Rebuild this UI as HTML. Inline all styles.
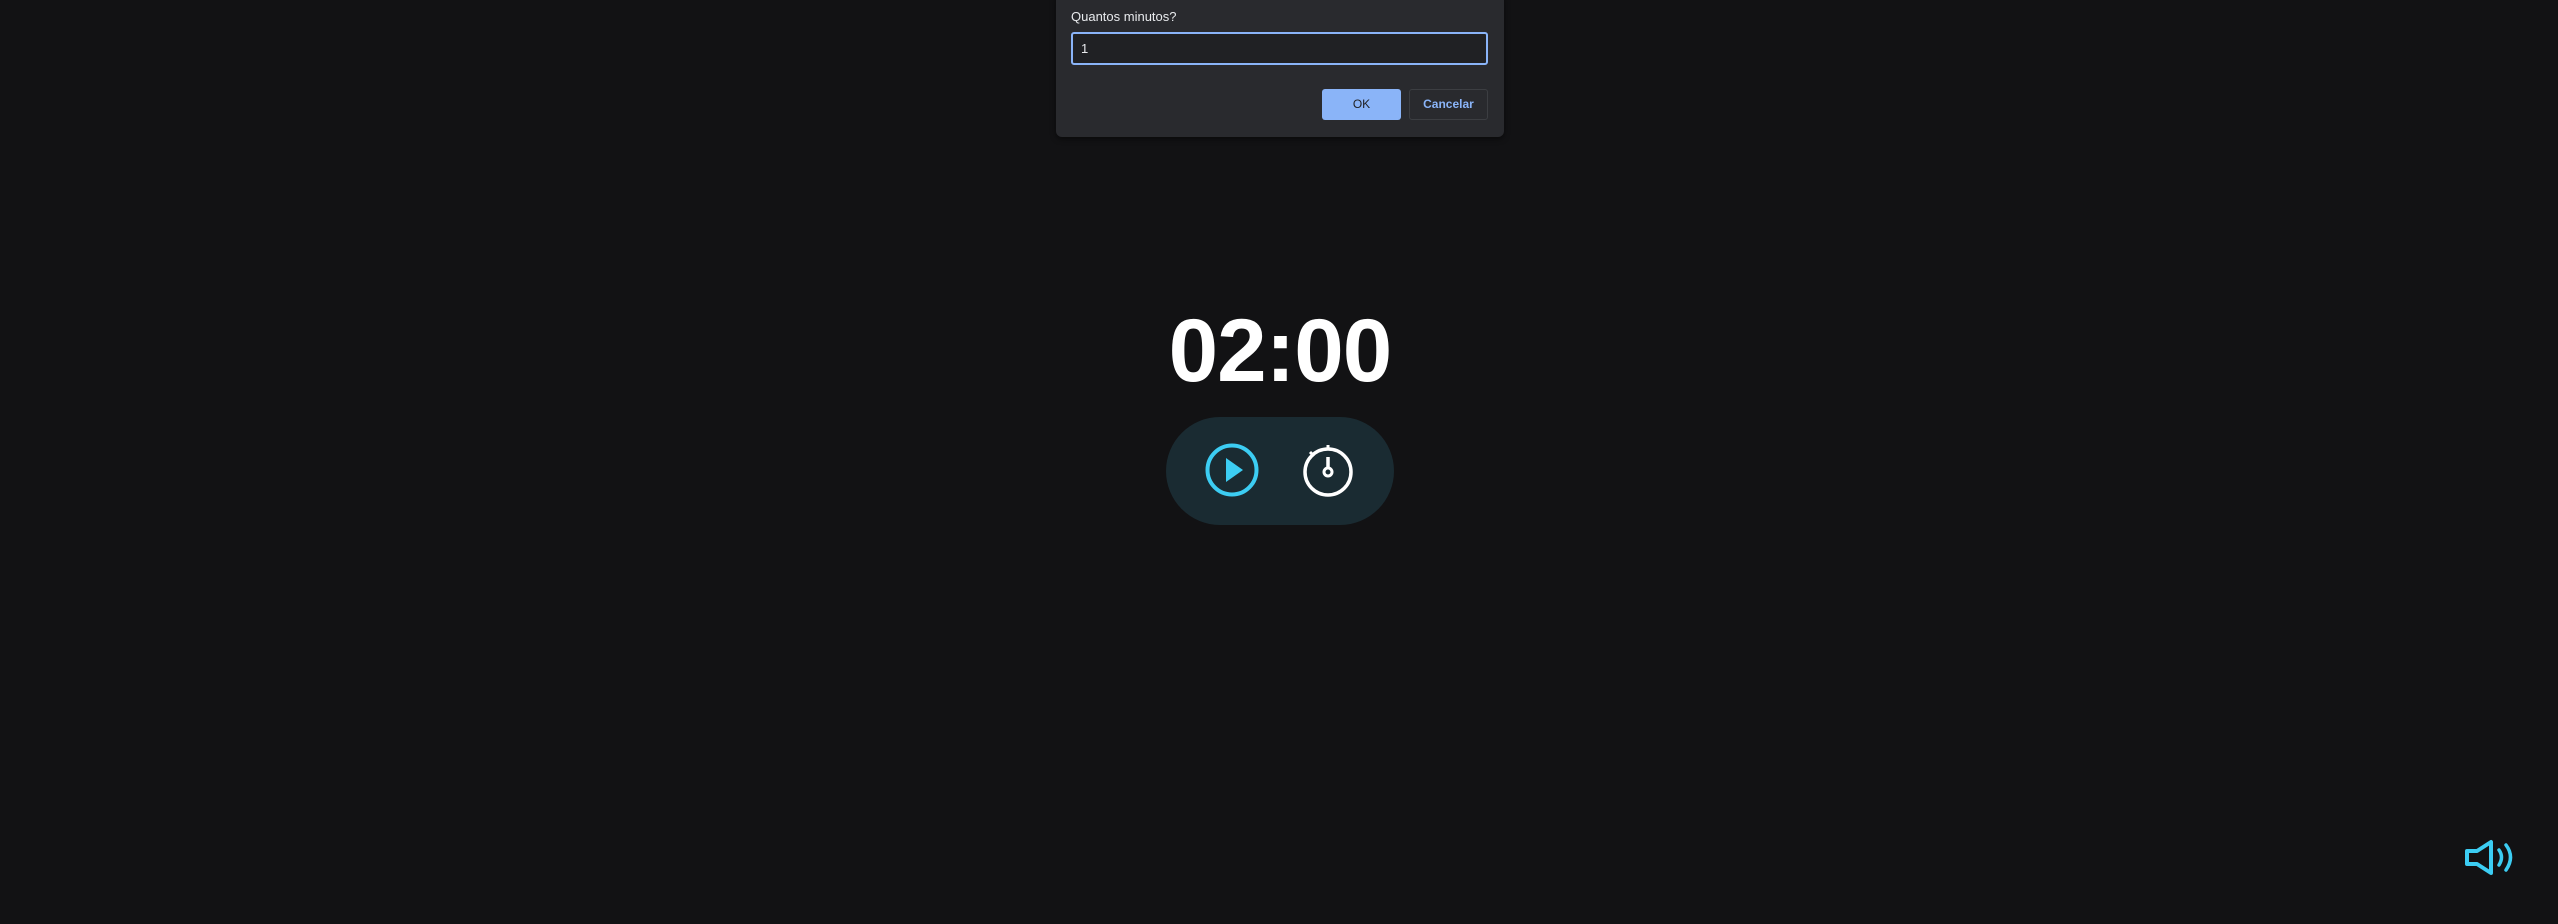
<!DOCTYPE html>
<html><head><style>
html,body{margin:0;padding:0;width:2558px;height:924px;background:#121214;overflow:hidden;font-family:"Liberation Sans",sans-serif}
.dlg{position:absolute;left:1056px;top:-4px;width:448px;height:141px;background:#292a2e;border-radius:0 0 6px 6px;box-shadow:0 2px 6px rgba(0,0,0,.5)}
.lbl{position:absolute;left:15px;top:13px;color:#e8eaed;font-size:13px}
.inp{position:absolute;left:15px;top:36px;height:29px;border:2px solid #8ab4f8;border-radius:3px;background:#202124;color:#e8eaed;font-size:13px;line-height:29px;padding-left:8px;box-sizing:content-box;width:405px}
.ok{position:absolute;left:266px;top:93px;width:79px;height:31px;background:#8ab4f8;border-radius:3px;color:#202124;font-size:12px;text-align:center;line-height:31px}
.cn{position:absolute;left:353px;top:93px;width:77px;height:29px;border:1px solid #3c3e42;border-radius:3px;color:#8ab4f8;font-size:12px;font-weight:bold;text-align:center;line-height:29px}
.time{position:absolute;left:1150px;width:260px;top:299px;text-align:center;color:#fff;font-size:89px;font-weight:bold;letter-spacing:-1px}
.pill{position:absolute;left:1166px;top:417px;width:228px;height:108px;border-radius:54px;background:#1a2b32}
</style></head><body>
<div class="dlg">
<div class="lbl">Quantos minutos?</div>
<div class="inp">1</div>
<div class="ok">OK</div>
<div class="cn">Cancelar</div>
</div>
<div class="time">02:00</div>
<div class="pill"></div>
<svg style="position:absolute;left:0;top:0" width="2558" height="924">
<circle cx="1232" cy="470" r="24.5" fill="none" stroke="#3ccdf3" stroke-width="4"/>
<path d="M1226 458 L1243 470 L1226 482 Z" fill="#3ccdf3"/>
<circle cx="1328" cy="472" r="23" fill="none" stroke="#fff" stroke-width="3.5"/>
<line x1="1328" y1="457" x2="1328" y2="469" stroke="#fff" stroke-width="3.5"/>
<circle cx="1328" cy="472" r="4" fill="none" stroke="#fff" stroke-width="3"/>
<line x1="1328" y1="445" x2="1328" y2="450" stroke="#fff" stroke-width="3"/>
<line x1="1310" y1="452" x2="1314" y2="456" stroke="#fff" stroke-width="3"/>
<path d="M2467 851 H2477 L2491 842 V873 L2477 864 H2467 Z" fill="none" stroke="#3ccdf3" stroke-width="4" stroke-linejoin="round"/>
<path d="M2499 850 Q2504 857 2499 865" fill="none" stroke="#3ccdf3" stroke-width="3.5" stroke-linecap="round"/>
<path d="M2506 845 Q2515 857 2506 870" fill="none" stroke="#3ccdf3" stroke-width="3.5" stroke-linecap="round"/>
</svg>
</body></html>
